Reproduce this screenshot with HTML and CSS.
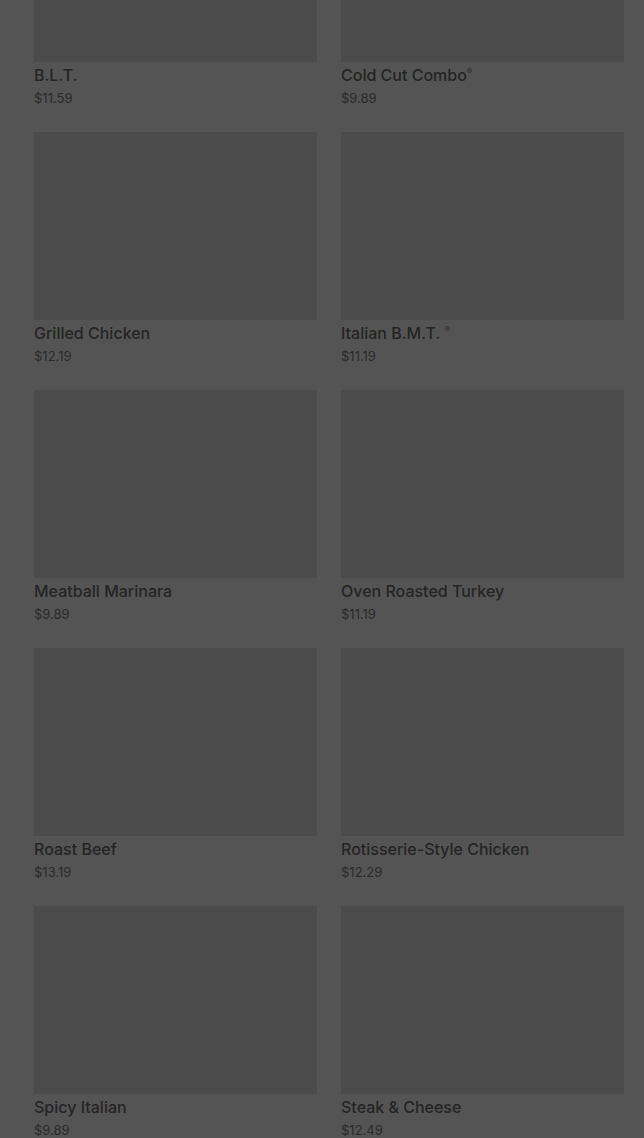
FILE: index.html
```html
<!DOCTYPE html>
<html lang="en">
<head>
    <meta charset="UTF-8">
    <meta name="viewport" content="width=device-width, initial-scale=1.0">
    <title>Menu</title>
    <link rel="stylesheet" href="styles.css">
</head>
<body>
    <div class="menu-grid">
        <div class="item"><div class="photo"></div><div class="name">B.L.T.</div><div class="price">$11.59</div></div>
        <div class="item"><div class="photo"></div><div class="name">Cold Cut Combo<sup>®</sup></div><div class="price">$9.89</div></div>
        <div class="item"><div class="photo"></div><div class="name">Grilled Chicken</div><div class="price">$12.19</div></div>
        <div class="item"><div class="photo"></div><div class="name">Italian B.M.T. <sup>®</sup></div><div class="price">$11.19</div></div>
        <div class="item"><div class="photo"></div><div class="name">Meatball Marinara</div><div class="price">$9.89</div></div>
        <div class="item"><div class="photo"></div><div class="name">Oven Roasted Turkey</div><div class="price">$11.19</div></div>
        <div class="item"><div class="photo"></div><div class="name">Roast Beef</div><div class="price">$13.19</div></div>
        <div class="item"><div class="photo"></div><div class="name">Rotisserie-Style Chicken</div><div class="price">$12.29</div></div>
        <div class="item"><div class="photo"></div><div class="name">Spicy Italian</div><div class="price">$9.89</div></div>
        <div class="item"><div class="photo"></div><div class="name">Steak &amp; Cheese</div><div class="price">$12.49</div></div>
    </div>
</body>
</html>
```

FILE: styles.css
```css
html, body { background-color: #545454; }
body { margin: 0; font-family: Inter, "Noto Sans", sans-serif; color: #242424; overflow: hidden; }
.menu-grid {
    display: grid;
    grid-template-columns: 283px 283px;
    column-gap: 24px;
    row-gap: 24px;
    padding: 0 20px 0 34px;
    margin-top: -126px;
}
.photo { height: 188px; background-color: #4b4b4b; }
.name { margin-top: 3px; font-size: 16px; font-weight: 500; line-height: 20px; }
.name sup { font-size: 8px; vertical-align: top; line-height: 12px; }
.price { margin-top: 4px; font-size: 13px; line-height: 19px; color: #2a2a2a; }
```
